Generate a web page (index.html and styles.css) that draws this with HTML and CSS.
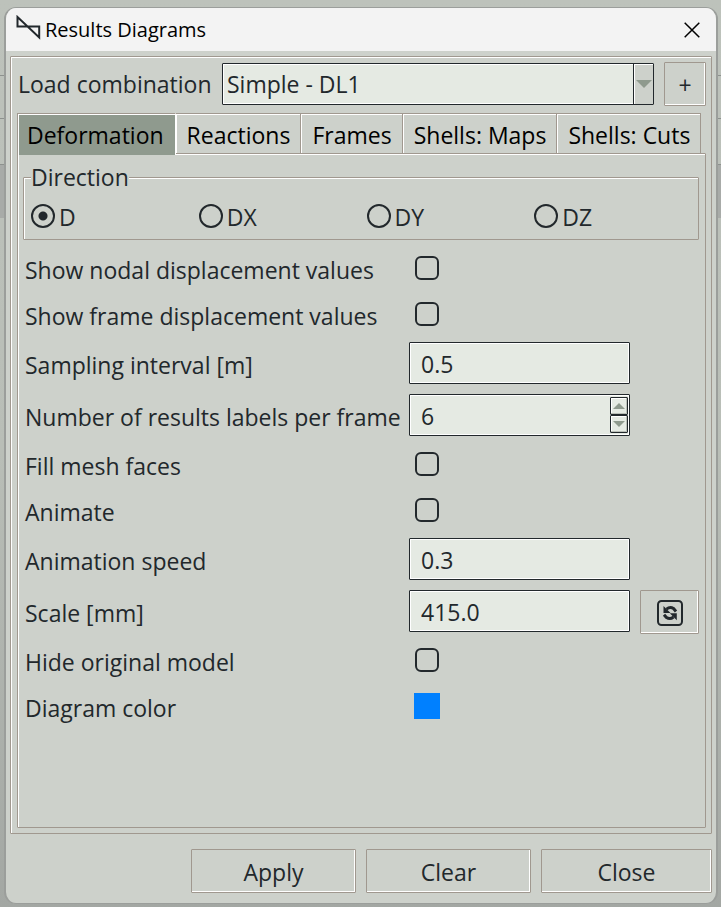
FILE: index.html
```html
<!DOCTYPE html>
<html lang="en">
<head>
<meta charset="utf-8">
<title>Results Diagrams</title>
<link rel="stylesheet" href="styles.css">
</head>
<body>
<main class="dialog">
  <header class="titlebar">
    <svg class="logo" viewBox="0 0 25 25" aria-hidden="true"><path d="M1.500 2V11.500H23.200V22.500L1.500 2Z" /></svg>
    <h1 class="title">Results Diagrams</h1>
    <button class="close" type="button" aria-label="Close window"><svg viewBox="0 0 16 16" aria-hidden="true"><path d="M.7.7 15.300 15.300M15.300.7.7 15.300"/></svg></button>
  </header>
  <form class="content">
    <section class="frame">
      <div class="load">
        <label for="combo">Load combination</label>
        <div class="combo">
          <select id="combo"><option>Simple - DL1</option></select>
          <span class="combo-arrow"></span>
        </div>
        <button class="button add" type="button">+</button>
      </div>
      <div class="tabs" role="tablist">
        <button class="tab active" type="button" role="tab" aria-selected="true">Deformation</button>
        <button class="tab" type="button" role="tab">Reactions</button>
        <button class="tab" type="button" role="tab">Frames</button>
        <button class="tab" type="button" role="tab">Shells: Maps</button>
        <button class="tab" type="button" role="tab">Shells: Cuts</button>
      </div>
      <div class="panel" role="tabpanel">
        <fieldset class="direction">
          <legend>Direction</legend>
          <div class="radios">
            <label><input type="radio" name="dir" checked><span>D</span></label>
            <label><input type="radio" name="dir"><span>DX</span></label>
            <label><input type="radio" name="dir"><span>DY</span></label>
            <label><input type="radio" name="dir"><span>DZ</span></label>
          </div>
        </fieldset>
        <div class="rows">
          <div class="row"><label for="nodal">Show nodal displacement values</label><input id="nodal" type="checkbox"></div>
          <div class="row"><label for="framev">Show frame displacement values</label><input id="framev" type="checkbox"></div>
          <div class="row"><label for="interval">Sampling interval [m]</label><input id="interval" class="field" type="text" value="0.5"></div>
          <div class="row"><label for="count">Number of results labels per frame</label>
            <div class="spin">
              <input id="count" class="field" type="number" value="6">
              <div class="steps">
                <button type="button" aria-label="Increase"><i class="up"></i></button>
                <button type="button" aria-label="Decrease"><i class="down"></i></button>
              </div>
            </div>
          </div>
          <div class="row"><label for="fill">Fill mesh faces</label><input id="fill" type="checkbox"></div>
          <div class="row"><label for="animate">Animate</label><input id="animate" type="checkbox"></div>
          <div class="row"><label for="speed">Animation speed</label><input id="speed" class="field" type="text" value="0.3"></div>
          <div class="row"><label for="scale">Scale [mm]</label><input id="scale" class="field" type="text" value="415.0">
            <button class="button refresh" type="button" aria-label="Recalculate scale">
              <svg viewBox="0 0 26 26" aria-hidden="true">
                <rect x="1" y="1" width="24" height="24" rx="3.500" fill="none" stroke="#22282c" stroke-width="2"/>
                <path d="M9.500 9.200Q13 6.300 16.500 8.500L19 11.500M16.500 17Q13 19.800 9.500 17.500L7 14.700" fill="none" stroke="#22282c" stroke-width="3"/>
                <path d="M6.500 6V13H13.500ZM19.800 20.200V13.200H12.800Z" fill="#22282c"/>
              </svg>
            </button>
          </div>
          <div class="row"><label for="hide">Hide original model</label><input id="hide" type="checkbox"></div>
          <div class="row"><label for="color">Diagram color</label><input id="color" type="color" value="#0080ff"></div>
        </div>
      </div>
    </section>
    <footer class="actions">
      <button class="button" type="button">Apply</button>
      <button class="button" type="button">Clear</button>
      <button class="button" type="button">Close</button>
    </footer>
  </form>
</main>
</body>
</html>
```
FILE: styles.css
```css
:root {
  --face: #cdd1cb;
  --line: #a0988f;
  --ink: #22282c;
  --field: #e5eae3;
  --sage: #8f9a8e;
}

* { box-sizing: border-box; }

body {
  margin: 0;
  min-height: 100vh;
  padding: 7px 3px 3px 4px;
  display: flex;
  background:
    linear-gradient(transparent 75px, #8d918e 75px 76px, transparent 76px 118px, #8d918e 118px 119px, transparent 119px 164px, #8d918e 164px 165px, #a8aba8 165px 218px, transparent 218px),
    linear-gradient(#bdc2bb, #b9beb7 50%, #a3a7a3);
  color: var(--ink);
  font: 23px/30px "Open Sans", "Noto Sans", sans-serif;
}

button, input, select {
  font: inherit;
  color: inherit;
  margin: 0;
  border-radius: 0;
}

.dialog {
  flex: 1;
  display: flex;
  flex-direction: column;
  border: 2px solid #9b9e9b;
  border-top-width: 1px;
  border-bottom-width: 1px;
  border-radius: 12px;
  overflow: hidden;
  background: var(--face);
}

.titlebar {
  display: flex;
  align-items: center;
  height: 43px;
  padding: 0 16px 0 10px;
  gap: 4px;
  background: #f3f3f3;
  color: #000;
}

.logo {
  width: 25px;
  height: 25px;
  margin-bottom: 4px;
  fill: none;
  stroke: #22282c;
  stroke-width: 2;
}

.title {
  flex: 1;
  margin: 0;
  font-size: 20px;
  font-weight: 400;
}

.close {
  display: flex;
  padding: 0;
  border: 0;
  background: none;
}

.close svg {
  width: 16px;
  height: 16px;
  stroke: #000;
  stroke-width: 1.5;
}

.content {
  flex: 1;
  display: flex;
  flex-direction: column;
  padding: 5px 4px 10px;
}

.frame {
  flex: 1;
  display: flex;
  flex-direction: column;
  padding: 4px 5px 5px 6px;
  border: 1px solid var(--line);
  border-radius: 1px;
  box-shadow: inset 1px 1px #fff;
}

.load {
  display: flex;
  align-items: center;
  gap: 10px;
  padding-left: 1px;
}

.load > label { min-width: 194px; white-space: nowrap; }

.combo {
  position: relative;
  flex: 1;
  display: flex;
}

.combo select {
  flex: 1;
  height: 42px;
  padding: 0 28px 0 4px;
  appearance: none;
  border: 1px solid var(--ink);
  border-radius: 1px;
  background: var(--field);
  box-shadow: inset 0 0 0 1px #fff;
}

.combo-arrow {
  position: absolute;
  inset: 1px 1px 1px auto;
  width: 20px;
  display: flex;
  align-items: center;
  justify-content: center;
  border-left: 1px solid var(--ink);
  background: var(--face);
  box-shadow: inset 1px 1px #fff;
  pointer-events: none;
}

.combo-arrow::after {
  content: "";
  border: 8px solid transparent;
  border-top-color: var(--sage);
  border-bottom: 0;
}

.button {
  padding: 2px 0 0;
  border: 1px solid var(--line);
  border-radius: 1px;
  background: var(--face);
  box-shadow: inset -1px -1px #fff;
}

.add { width: 42px; height: 44px; margin-top: 1px; }

.tabs {
  display: flex;
  margin-top: 7px;
}

.tab {
  height: 41px;
  padding: 2px 10px 0 11px;
  border: 1px solid var(--line);
  border-width: 1px 1px 0 0;
  background: var(--face);
  box-shadow: inset 1px 1px #fff;
  color: #000;
  white-space: nowrap;
}

.tab.active {
  position: relative;
  height: 42px;
  margin-bottom: -1px;
  padding: 1px 11px 0 9px;
  border-left-width: 1px;
  border-right-color: #fff;
  background: var(--sage);
}

.panel {
  flex: 1;
  margin-top: -1px;
  padding: 8px 6px 0 5px;
  border: 1px solid var(--line);
  border-radius: 1px;
  box-shadow: inset 1px 1px #fff;
}

.direction {
  min-width: 0;
  height: 78px;
  margin: 0;
  padding: 0 0 0 7px;
  border: 1px solid var(--line);
  border-radius: 1px;
  box-shadow: inset 1px 1px #fff;
}

.direction legend { padding: 0; background: var(--face); }

.radios {
  display: grid;
  grid-template-columns: repeat(4, 1fr);
  padding-top: 8px;
  margin-right: -4px;
}

.radios label { display: flex; align-items: center; gap: 4px; }
.radios span { padding-top: 2px; }

input[type="radio"],
input[type="checkbox"] {
  appearance: none;
  width: 24px;
  height: 24px;
  border: 2px solid var(--ink);
}

input[type="radio"] { border-radius: 50%; }

input[type="radio"]:checked {
  background: radial-gradient(circle, var(--ink) 4px, transparent 5px);
}

input[type="checkbox"] {
  margin-left: 6px;
  border-radius: 6px;
}

.rows {
  display: grid;
  gap: 10px;
  padding: 10px 0 0 2px;
}

.row {
  display: grid;
  grid-template-columns: 374px 1fr 59px;
  column-gap: 10px;
  align-items: center;
  min-height: 36px;
}

.row label { padding-top: 4px; white-space: nowrap; }

.field {
  display: block;
  width: 100%;
  height: 42px;
  padding: 2px 11px 0;
  border: 1px solid var(--ink);
  border-radius: 1px;
  background: var(--field);
  box-shadow: inset 0 0 0 1px #fff;
}

.spin { position: relative; }

.spin .field { appearance: textfield; }
.spin .field::-webkit-inner-spin-button { appearance: none; }

.steps {
  position: absolute;
  inset: 3px 2px 3px auto;
  width: 18px;
  display: grid;
}

.steps button {
  display: flex;
  align-items: center;
  justify-content: center;
  padding: 0;
  border: 1px solid var(--ink);
  border-radius: 1px;
  background: var(--field);
  box-shadow: inset -1px -1px #b9beb7, inset 1px 1px #fff;
}

.up, .down { border: 6px solid transparent; }
.up { border-top: 0; border-bottom-color: var(--sage); }
.down { border-bottom: 0; border-top-color: var(--sage); }

.refresh {
  display: flex;
  align-items: center;
  justify-content: center;
  height: 44px;
  margin-bottom: -2px;
}

.refresh svg { width: 26px; height: 26px; }

input[type="color"] {
  appearance: none;
  width: 26px;
  height: 26px;
  margin-left: 5px;
  padding: 0;
  border: 0;
  background: none;
}

input[type="color"]::-webkit-color-swatch-wrapper { padding: 0; }
input[type="color"]::-webkit-color-swatch { border: 0; border-radius: 0; }

.actions {
  display: flex;
  justify-content: flex-end;
  gap: 10px;
  padding-top: 15px;
}

.actions .button { width: 165px; height: 44px; }
.actions .button:last-child { width: 171px; }
```
